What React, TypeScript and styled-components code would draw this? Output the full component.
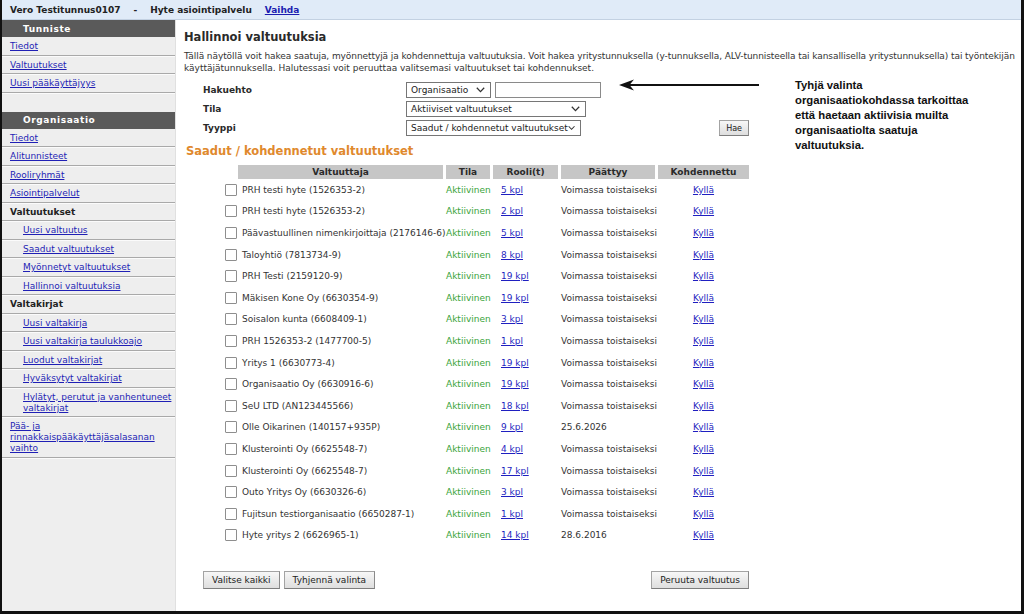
import React from "react";
import styled, { createGlobalStyle } from "styled-components";

const GlobalStyle = createGlobalStyle`
  html, body {
    margin: 0;
    padding: 0;
    background: #fff;
  }
  body {
    font-family: "DejaVu Sans", Verdana, sans-serif;
    font-size: 9px;
    color: #333;
  }
`;

const Frame = styled.div`
  position: relative;
  box-sizing: border-box;
  width: 1024px;
  height: 614px;
  border-left: 2px solid #111;
  border-right: 3px solid #111;
  border-bottom: 3px solid #111;
  display: flex;
  flex-direction: column;
  overflow: hidden;
`;

const TopBar = styled.header`
  flex: none;
  box-sizing: border-box;
  height: 20px;
  padding-left: 8px;
  display: flex;
  align-items: center;
  column-gap: 13px;
  background: #e0ebf8;
  border-bottom: 1px solid #c3d1e2;
  font-weight: bold;
  color: #222;
`;

const TopLink = styled.a`
  color: #1c1cb0;
  text-decoration: underline;
`;

const Body = styled.div`
  flex: 1;
  display: flex;
  min-height: 0;
`;

const Sidebar = styled.nav`
  flex: none;
  width: 173px;
  background: #eeeeee;
  border-right: 1px solid #e0e0e0;
`;

const SideHeader = styled.div`
  height: 17px;
  padding-left: 21px;
  display: flex;
  align-items: center;
  background: #5a5a5a;
  color: #fff;
  font-weight: bold;
  letter-spacing: 0.6px;
`;

const SideItem = styled.div<{ $indent?: boolean; $section?: boolean }>`
  padding: 4px 4px 2.5px ${(p) => (p.$indent ? 21 : 8)}px;
  line-height: 11px;
  border-bottom: 1px solid #a9a9a9;
  box-shadow: 0 1px 0 #fbfbfb;
  font-weight: ${(p) => (p.$section ? "bold" : "normal")};
  color: #222;
  white-space: nowrap;
`;

const SideLink = styled.a`
  color: #1f1fb5;
  text-decoration: underline;
`;

const SideSpacer = styled.div`
  height: 19px;
`;

const Main = styled.main`
  flex: 1;
  padding: 10px 8px 0;
`;

const Title = styled.h1`
  margin: 0;
  font-size: 11.5px;
  line-height: 14px;
  font-weight: bold;
  color: #2a2a2a;
`;

const Intro = styled.p`
  margin: 6px 0 0;
  line-height: 12px;
`;

const Line = styled.span<{ $tight?: boolean }>`
  display: block;
  white-space: nowrap;
  letter-spacing: ${(p) => (p.$tight ? "-0.08px" : "0")};
`;

const Panel = styled.div`
  margin-left: 19px;
  width: 546px;
`;

const Form = styled.div`
  margin-top: 8px;
  display: grid;
  grid-template-columns: 203px 1fr;
  row-gap: 3px;
  align-items: center;
`;

const Label = styled.div`
  font-weight: bold;
  color: #2a2a2a;
`;

const Controls = styled.div<{ $spread?: boolean }>`
  display: flex;
  align-items: center;
  gap: 4px;
  justify-content: ${(p) => (p.$spread ? "space-between" : "flex-start")};
`;

const SelectBox = styled.div<{ $w: number }>`
  box-sizing: border-box;
  width: ${(p) => p.$w}px;
  height: 16px;
  padding: 0 5px 0 4px;
  display: flex;
  align-items: center;
  justify-content: space-between;
  border: 1px solid #767676;
  background: #fff;
  color: #222;
  white-space: nowrap;
`;

const TextInput = styled.div`
  box-sizing: border-box;
  width: 106px;
  height: 16px;
  border: 1px solid #8a8a8a;
  background: #fff;
`;

const Button = styled.button<{ $small?: boolean }>`
  box-sizing: border-box;
  height: ${(p) => (p.$small ? 16 : 18)}px;
  padding: 0 ${(p) => (p.$small ? 6 : 8)}px;
  font-family: "DejaVu Sans", Verdana, sans-serif;
  font-size: ${(p) => (p.$small ? 8 : 9)}px;
  color: #222;
  background: linear-gradient(#f7f7f7, #dedede);
  border: 1px solid #a3a3a3;
  border-bottom-color: #7d7d7d;
  border-right-color: #8a8a8a;
  border-radius: 0;
`;

const SectionTitle = styled.h2`
  margin: 8px 0 0 2px;
  font-size: 11.5px;
  line-height: 14px;
  font-weight: bold;
  color: #e0892d;
`;

const TableWrap = styled.div`
  margin: 7px 0 0 19px;
`;

const GridRow = styled.div<{ $head?: boolean }>`
  display: grid;
  grid-template-columns: 13px 205px 44px 65px 94px 91px;
  column-gap: 3px;
  align-items: center;
  height: ${(p) => (p.$head ? "14px" : "21.6px")};
`;

const HeadCell = styled.div<{ $blank?: boolean }>`
  height: 14px;
  line-height: 14px;
  text-align: center;
  font-weight: bold;
  color: #2a2a2a;
  background: ${(p) => (p.$blank ? "transparent" : "#c6c6c6")};
`;

const Check = styled.span`
  display: block;
  box-sizing: border-box;
  width: 12px;
  height: 12px;
  margin-left: 3px;
  border: 1px solid #8e8e8e;
  border-radius: 1px;
  background: #fff;
`;

const Cell = styled.div<{ $pad?: number; $center?: boolean; $color?: string }>`
  padding-left: ${(p) => p.$pad ?? 0}px;
  text-align: ${(p) => (p.$center ? "center" : "left")};
  color: ${(p) => p.$color ?? "#333"};
  white-space: nowrap;
`;

const Link = styled.a`
  color: #1f1fc0;
  text-decoration: underline;
`;

const ButtonBar = styled.div`
  margin-top: 25px;
  display: flex;
  justify-content: space-between;
`;

const ButtonGroup = styled.div`
  display: flex;
  gap: 4px;
`;

const ArrowMark = styled.svg`
  position: absolute;
  left: 616px;
  top: 78px;
`;

const Note = styled.div`
  position: absolute;
  left: 793px;
  top: 77.5px;
  font-family: "Liberation Sans", Arial, sans-serif;
  font-size: 11.3px;
  font-weight: bold;
  line-height: 15px;
  color: #111;
`;

const Chevron = () => (
  <svg width="9" height="6" viewBox="0 0 9 6">
    <polyline points="0.8,0.8 4.5,4.6 8.2,0.8" fill="none" stroke="#333" strokeWidth="1.3" />
  </svg>
);

const Select = ({ w, children }: { w: number; children: React.ReactNode }) => (
  <SelectBox $w={w}>
    <span>{children}</span>
    <Chevron />
  </SelectBox>
);

const rows: [string, string, string][] = [
  ["PRH testi hyte (1526353-2)", "5 kpl", "Voimassa toistaiseksi"],
  ["PRH testi hyte (1526353-2)", "2 kpl", "Voimassa toistaiseksi"],
  ["Päävastuullinen nimenkirjoittaja (2176146-6)", "5 kpl", "Voimassa toistaiseksi"],
  ["Taloyhtiö (7813734-9)", "8 kpl", "Voimassa toistaiseksi"],
  ["PRH Testi (2159120-9)", "19 kpl", "Voimassa toistaiseksi"],
  ["Mäkisen Kone Oy (6630354-9)", "19 kpl", "Voimassa toistaiseksi"],
  ["Soisalon kunta (6608409-1)", "3 kpl", "Voimassa toistaiseksi"],
  ["PRH 1526353-2 (1477700-5)", "1 kpl", "Voimassa toistaiseksi"],
  ["Yritys 1 (6630773-4)", "19 kpl", "Voimassa toistaiseksi"],
  ["Organisaatio Oy (6630916-6)", "19 kpl", "Voimassa toistaiseksi"],
  ["SeU LTD (AN123445566)", "18 kpl", "Voimassa toistaiseksi"],
  ["Olle Oikarinen (140157+935P)", "9 kpl", "25.6.2026"],
  ["Klusterointi Oy (6625548-7)", "4 kpl", "Voimassa toistaiseksi"],
  ["Klusterointi Oy (6625548-7)", "17 kpl", "Voimassa toistaiseksi"],
  ["Outo Yritys Oy (6630326-6)", "3 kpl", "Voimassa toistaiseksi"],
  ["Fujitsun testiorganisaatio (6650287-1)", "1 kpl", "Voimassa toistaiseksi"],
  ["Hyte yritys 2 (6626965-1)", "14 kpl", "28.6.2016"],
];

export default function App() {
  return (
    <>
      <GlobalStyle />
      <Frame>
        <TopBar>
          <span>Vero Testitunnus0107</span>
          <span>-</span>
          <span>Hyte asiointipalvelu</span>
          <TopLink href="#">Vaihda</TopLink>
        </TopBar>
        <Body>
          <Sidebar>
            <SideHeader>Tunniste</SideHeader>
            <SideItem><SideLink href="#">Tiedot</SideLink></SideItem>
            <SideItem><SideLink href="#">Valtuutukset</SideLink></SideItem>
            <SideItem><SideLink href="#">Uusi pääkäyttäjyys</SideLink></SideItem>
            <SideSpacer />
            <SideHeader>Organisaatio</SideHeader>
            <SideItem><SideLink href="#">Tiedot</SideLink></SideItem>
            <SideItem><SideLink href="#">Alitunnisteet</SideLink></SideItem>
            <SideItem><SideLink href="#">Rooliryhmät</SideLink></SideItem>
            <SideItem><SideLink href="#">Asiointipalvelut</SideLink></SideItem>
            <SideItem $section>Valtuutukset</SideItem>
            <SideItem $indent><SideLink href="#">Uusi valtuutus</SideLink></SideItem>
            <SideItem $indent><SideLink href="#">Saadut valtuutukset</SideLink></SideItem>
            <SideItem $indent><SideLink href="#">Myönnetyt valtuutukset</SideLink></SideItem>
            <SideItem $indent><SideLink href="#">Hallinnoi valtuutuksia</SideLink></SideItem>
            <SideItem $section>Valtakirjat</SideItem>
            <SideItem $indent><SideLink href="#">Uusi valtakirja</SideLink></SideItem>
            <SideItem $indent><SideLink href="#">Uusi valtakirja taulukkoajo</SideLink></SideItem>
            <SideItem $indent><SideLink href="#">Luodut valtakirjat</SideLink></SideItem>
            <SideItem $indent><SideLink href="#">Hyväksytyt valtakirjat</SideLink></SideItem>
            <SideItem $indent>
              <SideLink href="#">Hylätyt, perutut ja vanhentuneet<br />valtakirjat</SideLink>
            </SideItem>
            <SideItem>
              <SideLink href="#">Pää- ja<br />rinnakkaispääkäyttäjäsalasanan<br />vaihto</SideLink>
            </SideItem>
          </Sidebar>

          <Main>
            <Title>Hallinnoi valtuutuksia</Title>
            <Intro>
              <Line $tight>
                Tällä näytöllä voit hakea saatuja, myönnettyjä ja kohdennettuja valtuutuksia. Voit hakea yritystunnuksella (y-tunnuksella, ALV-tunnisteella tai kansallisella yritystunnuksella) tai työntekijän
              </Line>
              <Line>käyttäjätunnuksella. Halutessasi voit peruuttaa valitsemasi valtuutukset tai kohdennukset.</Line>
            </Intro>

            <Panel>
              <Form>
                <Label>Hakuehto</Label>
                <Controls>
                  <Select w={85}>Organisaatio</Select>
                  <TextInput />
                </Controls>
                <Label>Tila</Label>
                <Controls>
                  <Select w={180}>Aktiiviset valtuutukset</Select>
                </Controls>
                <Label>Tyyppi</Label>
                <Controls $spread>
                  <Select w={175}>Saadut / kohdennetut valtuutukset</Select>
                  <Button $small>Hae</Button>
                </Controls>
              </Form>
            </Panel>

            <SectionTitle>Saadut / kohdennetut valtuutukset</SectionTitle>

            <Panel>
              <TableWrap>
                <GridRow $head>
                  <HeadCell $blank />
                  <HeadCell>Valtuuttaja</HeadCell>
                  <HeadCell>Tila</HeadCell>
                  <HeadCell>Rooli(t)</HeadCell>
                  <HeadCell>Päättyy</HeadCell>
                  <HeadCell>Kohdennettu</HeadCell>
                </GridRow>
                {rows.map(([name, roles, ends], i) => (
                  <GridRow key={i}>
                    <Check />
                    <Cell $pad={4}>{name}</Cell>
                    <Cell $color="#3aa33a">Aktiivinen</Cell>
                    <Cell $pad={8}><Link href="#">{roles}</Link></Cell>
                    <Cell>{ends}</Cell>
                    <Cell $center><Link href="#">Kyllä</Link></Cell>
                  </GridRow>
                ))}
              </TableWrap>

              <ButtonBar>
                <ButtonGroup>
                  <Button>Valitse kaikki</Button>
                  <Button>Tyhjennä valinta</Button>
                </ButtonGroup>
                <Button>Peruuta valtuutus</Button>
              </ButtonBar>
            </Panel>
          </Main>
        </Body>

        <ArrowMark width="144" height="14" viewBox="0 0 144 14">
          <line x1="10" y1="7" x2="141" y2="7" stroke="#111" strokeWidth="2.2" />
          <path d="M1 7 L16 1.5 L11.5 7 L16 12.5 Z" fill="#111" />
        </ArrowMark>
        <Note>
          Tyhjä valinta
          <br />
          organisaatiokohdassa tarkoittaa
          <br />
          että haetaan aktiivisia muilta
          <br />
          organisaatiolta saatuja
          <br />
          valtuutuksia.
        </Note>
      </Frame>
    </>
  );
}
